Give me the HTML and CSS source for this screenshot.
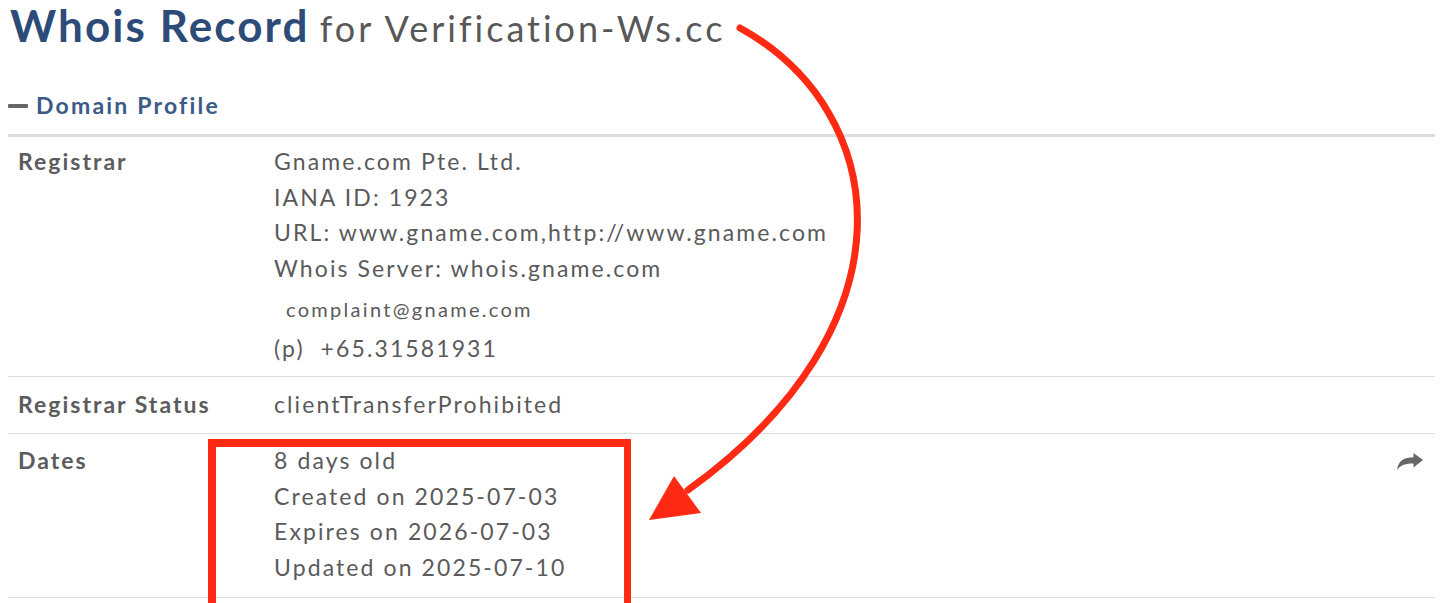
FILE: index.html
```html
<!DOCTYPE html>
<html lang="en">
<head>
<meta charset="utf-8">
<title>Whois Record for Verification-Ws.cc</title>
<link rel="stylesheet" href="styles.css">
</head>
<body>
<div class="page">
  <h1 class="title"><span class="title-main">Whois Record</span> <span class="title-sub">for Verification-Ws.cc</span></h1>

  <div class="section-head">
    <span class="minus"></span>
    <span class="section-name">Domain Profile</span>
  </div>

  <div class="table">
    <div class="row row-registrar">
      <div class="label">Registrar</div>
      <div class="value">
        <div class="line">Gname.com Pte. Ltd.</div>
        <div class="line">IANA ID: 1923</div>
        <div class="line">URL: www.gname.com,http://www.gname.com</div>
        <div class="line">Whois Server: whois.gname.com</div>
        <div class="line email">complaint@gname.com</div>
        <div class="line phone">(p)&nbsp; +65.31581931</div>
      </div>
    </div>
    <div class="row row-status">
      <div class="label">Registrar Status</div>
      <div class="value">
        <div class="line">clientTransferProhibited</div>
      </div>
    </div>
    <div class="row row-dates">
      <div class="label">Dates</div>
      <div class="value">
        <div class="line">8 days old</div>
        <div class="line">Created on 2025-07-03</div>
        <div class="line">Expires on 2026-07-03</div>
        <div class="line">Updated on 2025-07-10</div>
      </div>
      <div class="share">
        <svg width="26" height="18" viewBox="0 0 26 18"><path d="M26 7 L16.5 0 L16.5 4.2 C7.5 4.2 1.2 7.6 0 17 C3.6 11.6 9 10.4 16.5 10.4 L16.5 14.5 Z" fill="#666"/></svg>
      </div>
    </div>
  </div>
</div>

<div class="highlight-box"></div>
<svg class="annotation" width="1440" height="603" viewBox="0 0 1440 603">
  <path d="M740 28 C892 112, 918 325, 688 490" fill="none" stroke="#ff2a14" stroke-width="7" stroke-linecap="round"/>
  <polygon points="649,520 674,476 701,513" fill="#ff2a14"/>
</svg>
</body>
</html>
```

FILE: styles.css
```css
html, body {
  margin: 0;
  padding: 0;
  background: #ffffff;
}

body {
  font-family: Lato, "Open Sans", "Liberation Sans", sans-serif;
  color: #555555;
  width: 1440px;
  height: 603px;
  overflow: hidden;
  position: relative;
}

.page {
  padding: 0 5px 0 8px;
}

.title {
  margin: 0;
  padding: 0 0 0 2px;
  font-weight: 400;
  line-height: 50px;
  white-space: nowrap;
}

.title-main {
  font-size: 44px;
  color: #2c4b78;
  font-weight: 700;
  letter-spacing: 2.1px;
}

.title-sub {
  font-size: 36px;
  color: #585858;
  font-weight: 400;
  letter-spacing: 3px;
  margin-left: 2px;
}

.section-head {
  display: flex;
  align-items: center;
  margin-top: 34px;
  height: 32px;
}

.minus {
  width: 20px;
  height: 4px;
  background: #666666;
  border-radius: 1px;
  margin-right: 8px;
  margin-top: 1px;
}

.section-name {
  font-size: 23px;
  font-weight: 700;
  color: #3b5a88;
  letter-spacing: 2.2px;
}

.table {
  margin-top: 13px;
  border-top: 3px solid #dddddd;
}

.row {
  display: flex;
  padding: 10px 0 10px 10px;
  border-bottom: 1px solid #dddddd;
  font-size: 23px;
  line-height: 35.5px;
}

.row-registrar {
  padding-top: 7px;
  padding-bottom: 10px;
}

.row-status {
  padding-top: 10px;
  padding-bottom: 10.5px;
}

.row-dates {
  padding-top: 9px;
  padding-bottom: 12px;
}

.label {
  width: 256px;
  flex: none;
  font-weight: 700;
  color: #5c5c5c;
  letter-spacing: 2px;
}

.value {
  flex: 1;
  color: #5a5a5a;
  letter-spacing: 2.1px;
}

.line.email {
  font-size: 20px;
  letter-spacing: 2.3px;
  padding-left: 12px;
  margin-top: 6px;
}

.line.phone {
  margin-top: 3px;
}

.share {
  flex: none;
  width: 26px;
  margin-right: 12px;
  padding-top: 2px;
}

.highlight-box {
  position: absolute;
  left: 208px;
  top: 439px;
  width: 408px;
  height: 170px;
  border: 8px solid #ff2a14;
  border-right-width: 7px;
}

.annotation {
  position: absolute;
  left: 0;
  top: 0;
  pointer-events: none;
}
```
